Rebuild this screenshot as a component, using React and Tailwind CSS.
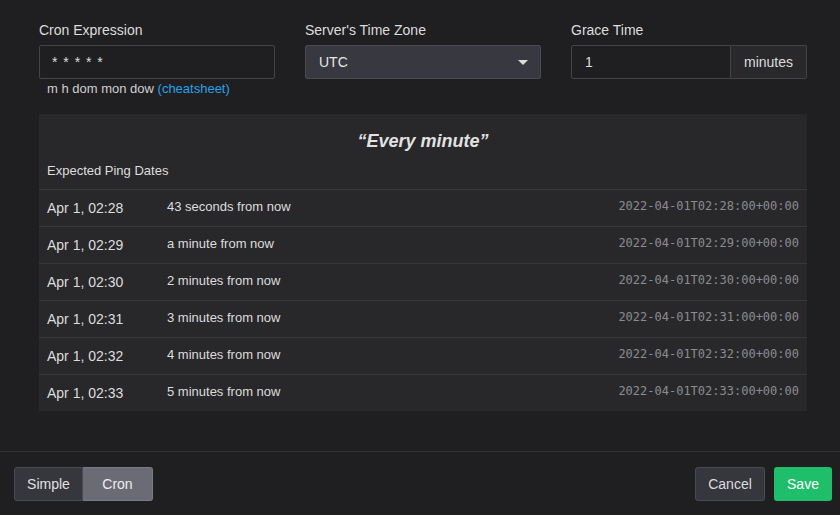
import React from 'react';

const rows = [
  { date: 'Apr 1, 02:28', rel: '43 seconds from now', iso: '2022-04-01T02:28:00+00:00' },
  { date: 'Apr 1, 02:29', rel: 'a minute from now', iso: '2022-04-01T02:29:00+00:00' },
  { date: 'Apr 1, 02:30', rel: '2 minutes from now', iso: '2022-04-01T02:30:00+00:00' },
  { date: 'Apr 1, 02:31', rel: '3 minutes from now', iso: '2022-04-01T02:31:00+00:00' },
  { date: 'Apr 1, 02:32', rel: '4 minutes from now', iso: '2022-04-01T02:32:00+00:00' },
  { date: 'Apr 1, 02:33', rel: '5 minutes from now', iso: '2022-04-01T02:33:00+00:00' },
];

export default function App() {
  return (
    <div className="w-[840px] h-[515px] bg-[#1f1f21] text-[#dddddd] font-['Liberation_Sans',Arial,sans-serif] flex flex-col overflow-hidden">
      {/* Body */}
      <div className="h-[452px] pl-[39px] pr-[33px] pt-[20px] border-b border-[#333336]">
        <div className="grid grid-cols-3 gap-[30px]">
          <div>
            <label className="block text-[14px] leading-[20px] mb-[5px]">Cron Expression</label>
            <div className="h-[34px] border border-[#444447] rounded-[2px] px-[12px] flex items-center text-[14px] tracking-[1px]">* * * * *</div>
            <div className="text-[13px] leading-[18px] mt-[1px] pl-[8px] text-[#cfcfcf]">
              m h dom mon dow <span className="text-[#2aa1e8]">(cheatsheet)</span>
            </div>
          </div>
          <div>
            <label className="block text-[14px] leading-[20px] mb-[5px]">Server's Time Zone</label>
            <div className="h-[34px] border border-[#4a4a52] bg-[#383840] rounded-[2px] pl-[13px] pr-[12px] flex items-center justify-between text-[14px]">
              <span className="text-[#e6e6e6]">UTC</span>
              <svg width="10" height="5" viewBox="0 0 10 5"><path d="M0 0h10L5 5z" fill="#dddddd" /></svg>
            </div>
          </div>
          <div>
            <label className="block text-[14px] leading-[20px] mb-[5px]">Grace Time</label>
            <div className="flex h-[34px]">
              <div className="flex-1 border border-[#444447] rounded-l-[2px] px-[13px] flex items-center text-[14px]">1</div>
              <div className="w-[76px] border border-l-0 border-[#444447] bg-[#29292b] rounded-r-[2px] flex items-center justify-center text-[14px]">minutes</div>
            </div>
          </div>
        </div>

        <div className="mt-[16px] bg-[#28282b]">
          <div className="text-center italic font-bold text-[18px] leading-[24px] pt-[15px] text-[#e2e2e2]">“Every minute”</div>
          <div className="text-[13px] leading-[18px] px-[8px] pt-[9px] pb-[9px]">Expected Ping Dates</div>
          {rows.map((r) => (
            <div key={r.iso} className="h-[37px] border-t border-[#38383b] flex items-center px-[8px]">
              <span className="w-[120px] text-[14px]">{r.date}</span>
              <span className="flex-1 text-[13px] mb-[2px]">{r.rel}</span>
              <span className="font-['DejaVu_Sans_Mono',monospace] text-[12px] text-[#8c8c90] mb-[4px]">{r.iso}</span>
            </div>
          ))}
        </div>
      </div>

      {/* Footer */}
      <div className="flex items-center justify-between px-[14px] pt-[15px]">
        <div className="flex h-[34px] text-[14px]">
          <div className="w-[69px] flex items-center justify-center bg-[#36363d] border border-[#4a4a52] rounded-l-[3px] text-[#e0e0e0]">Simple</div>
          <div className="w-[70px] flex items-center justify-center bg-[#6b6b76] border border-l-0 border-[#7a7a85] rounded-r-[3px] text-[#eeeeee]">Cron</div>
        </div>
        <div className="flex gap-[9px] h-[34px] text-[14px] mr-[-6px]">
          <div className="w-[70px] flex items-center justify-center bg-[#36363d] border border-[#4a4a52] rounded-[3px]">Cancel</div>
          <div className="w-[58px] flex items-center justify-center bg-[#1ebe6a] rounded-[3px] text-white">Save</div>
        </div>
      </div>
    </div>
  );
}
